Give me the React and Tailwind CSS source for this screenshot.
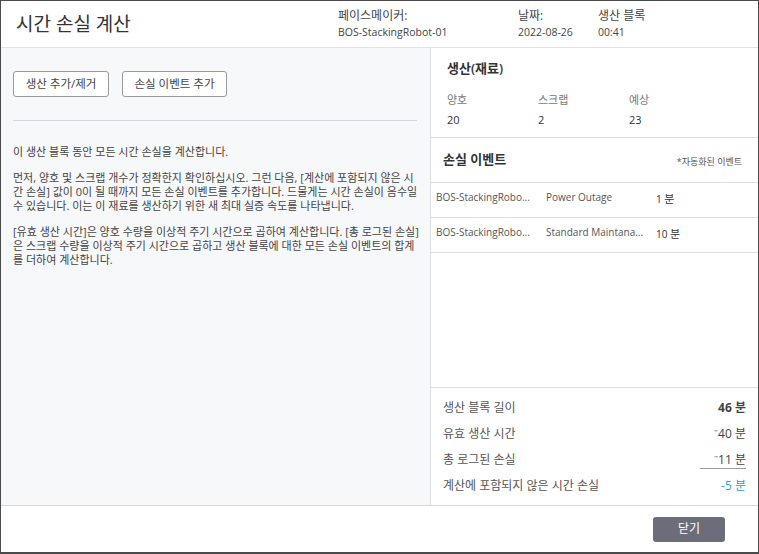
const FONT = "font-['Open_Sans','Noto_Sans_CJK_KR',sans-serif]";

const infoCols = [
  { label: "페이스메이커:", value: "BOS-StackingRobot-01", w: "w-[180px]" },
  { label: "날짜:", value: "2022-08-26", w: "w-[80px]" },
  { label: "생산 블록", value: "00:41", w: "w-[80px]" },
];

const counts = [
  { label: "양호", value: "20" },
  { label: "스크랩", value: "2" },
  { label: "예상", value: "23" },
];

const events = [
  { source: "BOS-StackingRobo...", reason: "Power Outage", mins: "1", unit: "분" },
  { source: "BOS-StackingRobo...", reason: "Standard Maintana...", mins: "10", unit: "분" },
];

const helpText = [
  ["이 생산 블록 동안 모든 시간 손실을 계산합니다."],
  [
    "먼저, 양호 및 스크랩 개수가 정확한지 확인하십시오. 그런 다음, [계산에 포함되지 않은 시",
    "간 손실] 값이 0이 될 때까지 모든 손실 이벤트를 추가합니다. 드물게는 시간 손실이 음수일",
    "수 있습니다. 이는 이 재료를 생산하기 위한 새 최대 실증 속도를 나타냅니다.",
  ],
  [
    "[유효 생산 시간]은 양호 수량을 이상적 주기 시간으로 곱하여 계산합니다. [총 로그된 손실]",
    "은 스크랩 수량을 이상적 주기 시간으로 곱하고 생산 블록에 대한 모든 손실 이벤트의 합계",
    "를 더하여 계산합니다.",
  ],
];

function SummaryRow({ label, children }) {
  return (
    <div className="flex h-[26px] items-center justify-between">
      <span className="text-[12px] text-[#555]">{label}</span>
      {children}
    </div>
  );
}

export default function App() {
  return (
    <div className={`${FONT} flex h-[554px] w-[759px] flex-col border border-b-2 border-[#4a4a4a] bg-white text-[#333]`}>
      {/* header */}
      <div className="flex h-[47px] shrink-0 items-center border-b border-[#e2e3e5] pl-[15px]">
        <h1 className="w-[322px] text-[19px] leading-none text-[#333]">시간 손실 계산</h1>
        {infoCols.map((c) => (
          <div key={c.label} className={`${c.w} leading-[16px] text-[#444]`}>
            <div className="text-[12px]">{c.label}</div>
            <div className="text-[10.5px]">{c.value}</div>
          </div>
        ))}
      </div>

      {/* body */}
      <div className="flex min-h-0 flex-1">
        <div className="w-[430px] shrink-0 border-r border-[#dcdde0] bg-[#f7f8fa] pl-3 pr-[13px] pt-[23px]">
          <div className="flex gap-[13px]">
            <button className="h-[26px] w-[96px] rounded-[3px] border border-[#9a9a9a] bg-white text-[11.5px] text-[#444]">
              생산 추가/제거
            </button>
            <button className="h-[26px] w-[105px] rounded-[3px] border border-[#9a9a9a] bg-white text-[11.5px] text-[#444]">
              손실 이벤트 추가
            </button>
          </div>
          <div className="mt-[23px] h-px bg-[#d6d7da]" />
          <div className="mt-[24px] flex flex-col gap-[12px] text-[11px] leading-[14px] text-[#444]">
            {helpText.map((p, i) => (
              <p key={i}>
                {p.map((line) => (
                  <span key={line} className="block whitespace-nowrap">
                    {line}
                  </span>
                ))}
              </p>
            ))}
          </div>
        </div>

        <div className="flex min-w-0 flex-1 flex-col">
          <div className="h-[90px] shrink-0 border-b border-[#dcdde0] px-4 pt-[12px]">
            <div className="text-[13px] font-semibold leading-[16px]">생산(재료)</div>
            <div className="mt-[16px] flex">
              {counts.map((c) => (
                <div key={c.label} className="w-[91px]">
                  <div className="text-[11px] leading-[16px] text-[#777]">{c.label}</div>
                  <div className="mt-[4px] text-[11px] font-medium leading-[16px] text-[#333]">{c.value}</div>
                </div>
              ))}
            </div>
          </div>

          <div className="flex h-[45px] shrink-0 items-center justify-between border-b border-[#dcdde0] pl-3 pr-4">
            <span className="text-[13px] font-semibold">손실 이벤트</span>
            <span className="mt-[3px] text-[9px] text-[#555]">*자동화된 이벤트</span>
          </div>

          {events.map((e, i) => (
            <div key={i} className="flex h-[35px] shrink-0 border-b border-[#dcdde0] pl-[5px] pt-[7px] leading-[14px]">
              <span className="w-[110px] text-[10px] text-[#555]">{e.source}</span>
              <span className="w-[110px] text-[10px] text-[#555]">{e.reason}</span>
              <span className="text-[#333]">
                <span className="text-[10px]">{e.mins} </span>
                <span className="text-[11px]">{e.unit}</span>
              </span>
            </div>
          ))}

          <div className="flex-1" />

          <div className="shrink-0 border-t border-[#dcdde0] pl-3 pr-3 pt-[7px] pb-[6px]">
            <SummaryRow label="생산 블록 길이">
              <span className="text-[12px] font-bold text-[#444]">46 분</span>
            </SummaryRow>
            <SummaryRow label="유효 생산 시간">
              <span className="text-[12px] text-[#444]">⁻40 분</span>
            </SummaryRow>
            <SummaryRow label="총 로그된 손실">
              <span className="border-b border-[#9a9a9a] pl-[14px] text-[12px] leading-[16px] text-[#444]">⁻11 분</span>
            </SummaryRow>
            <SummaryRow label="계산에 포함되지 않은 시간 손실">
              <span className="text-[12px] text-[#2a9fd6]">-5 분</span>
            </SummaryRow>
          </div>
        </div>
      </div>

      {/* footer */}
      <div className="flex h-[47px] shrink-0 items-center justify-end border-t border-[#d6d7da] pr-[33px]">
        <button className="h-[25px] w-[72px] rounded-[3px] bg-[#6b6e7a] text-[12px] text-white">닫기</button>
      </div>
    </div>
  );
}
